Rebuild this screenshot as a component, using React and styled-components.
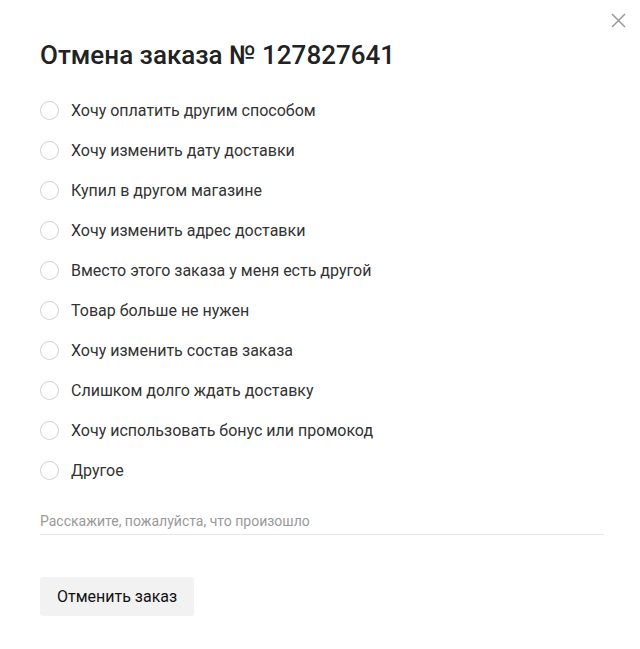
import React from 'react';
import styled, { createGlobalStyle } from 'styled-components';

const reasons = [
  'Хочу оплатить другим способом',
  'Хочу изменить дату доставки',
  'Купил в другом магазине',
  'Хочу изменить адрес доставки',
  'Вместо этого заказа у меня есть другой',
  'Товар больше не нужен',
  'Хочу изменить состав заказа',
  'Слишком долго ждать доставку',
  'Хочу использовать бонус или промокод',
  'Другое',
];

const GlobalStyle = createGlobalStyle`
  body {
    margin: 0;
    background: #fff;
    font-family: Roboto, "Liberation Sans", sans-serif;
    color: #222;
  }
`;

const Modal = styled.div`
  position: relative;
  width: 640px;
  height: 649px;
  box-sizing: border-box;
  padding: 39px 36px 0 40px;
  background: #fff;
`;

const Close = styled.button`
  position: absolute;
  top: 13px;
  right: 14px;
  width: 15px;
  height: 15px;
  padding: 0;
  border: 0;
  background: none;
  cursor: pointer;
`;

const Title = styled.h1`
  margin: 0 0 29px;
  font-size: 26px;
  line-height: 32px;
  font-weight: 500;
  color: #222;
`;

const List = styled.div`
  display: flex;
  flex-direction: column;
  gap: 20px;
`;

const Option = styled.label`
  display: flex;
  align-items: center;
  gap: 12px;
  height: 20px;
  font-size: 16px;
  color: #333;
  cursor: pointer;
`;

const Radio = styled.span`
  width: 17px;
  height: 17px;
  border: 1.5px solid #d0d0d0;
  border-radius: 50%;
  flex: none;
`;

const Field = styled.input`
  display: block;
  width: 564px;
  height: 22px;
  box-sizing: border-box;
  margin-top: 33px;
  padding: 0 0 6px;
  border: 0;
  border-bottom: 1px solid #e6e6e6;
  outline: none;
  font-family: inherit;
  font-size: 14px;
  line-height: 16px;
  color: #333;
  &::placeholder {
    color: #999;
  }
`;

const Submit = styled.button`
  display: block;
  margin-top: 42px;
  height: 39px;
  padding: 0 17px;
  border: 0;
  border-radius: 3px;
  background: #f2f2f2;
  font-family: inherit;
  font-size: 16px;
  color: #111;
  cursor: pointer;
`;

export default function App() {
  return (
    <>
      <GlobalStyle />
      <Modal>
        <Close aria-label="Закрыть">
          <svg width="15" height="15" viewBox="0 0 15 15">
            <path d="M1 1L14 14M14 1L1 14" stroke="#999" strokeWidth="1.5" />
          </svg>
        </Close>
        <Title>Отмена заказа № 127827641</Title>
        <List>
          {reasons.map(r => (
            <Option key={r}>
              <Radio />
              {r}
            </Option>
          ))}
        </List>
        <Field placeholder="Расскажите, пожалуйста, что произошло" />
        <Submit>Отменить заказ</Submit>
      </Modal>
    </>
  );
}
